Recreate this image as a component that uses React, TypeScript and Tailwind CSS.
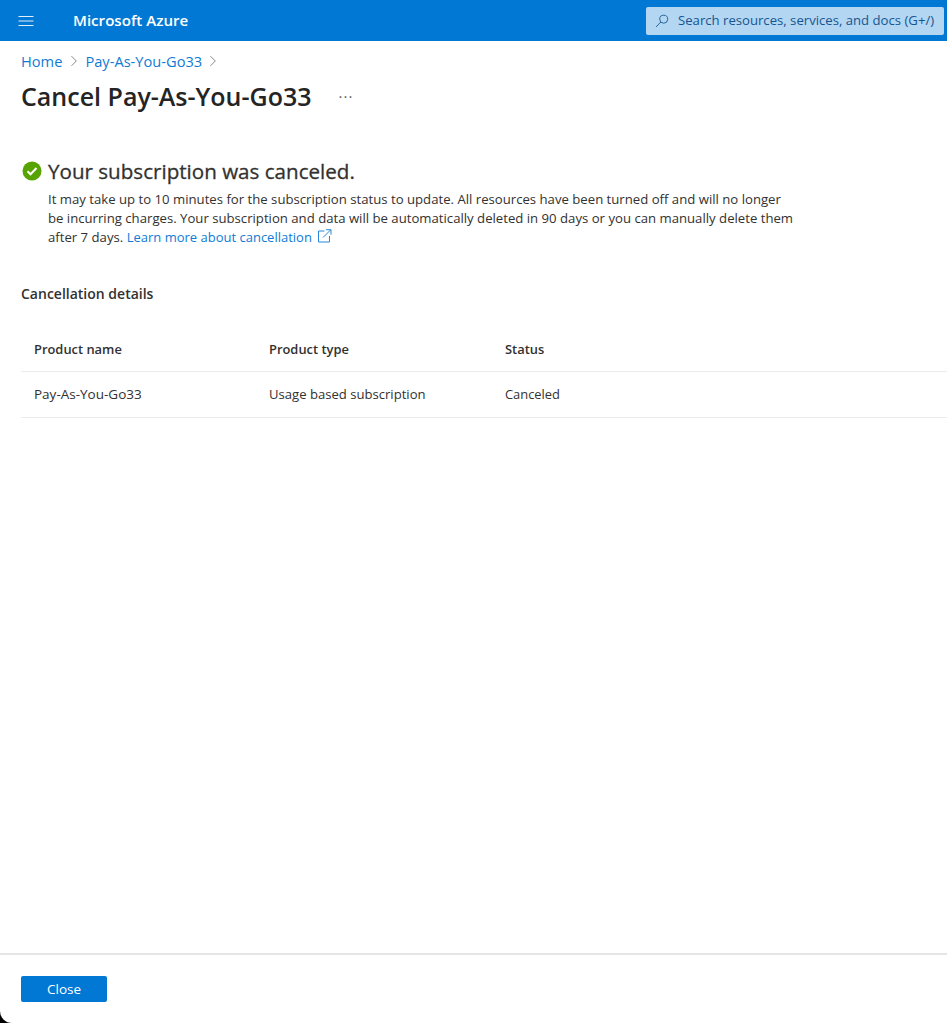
import React from "react";

function Chevron() {
  return (
    <svg width="8" height="12" viewBox="0 0 8 12" fill="none" className="shrink-0">
      <path d="M1.5 1.2 6.3 6l-4.8 4.8" stroke="#8a8886" strokeWidth="1" />
    </svg>
  );
}

export default function App() {
  return (
    <div className="h-[1023px] w-[947px] overflow-hidden bg-black">
      <div className="flex h-full flex-col rounded-bl-[12px] bg-white font-['Open_Sans','Noto_Sans',sans-serif] text-[#323130]">
        <header className="flex h-[41px] shrink-0 items-center bg-[#0078d4] pl-[18px] pr-[3px]">
          <svg width="16" height="12" viewBox="0 0 16 12" fill="none">
            <path d="M0.5 1.5h15M0.5 6h15M0.5 10.500h15" stroke="#e3effa" strokeWidth="1" />
          </svg>
          <span className="ml-[39px] text-[15.100px] font-semibold leading-none text-white">Microsoft Azure</span>
          <div className="ml-auto flex h-[28px] w-[298px] items-center rounded-[2px] bg-[#b3d6f2] pl-[9px]">
            <svg width="14" height="14" viewBox="0 0 14 14" fill="none">
              <circle cx="8.700" cy="5.200" r="4" stroke="#1b5a8f" strokeWidth="0.900" />
              <path d="M5.800 8 1 13" stroke="#1b5a8f" strokeWidth="0.900" />
            </svg>
            <span className="ml-[9px] whitespace-nowrap text-[13.150px] leading-none text-[#15558f]">
              Search resources, services, and docs (G+/)
            </span>
          </div>
        </header>

        <main className="min-h-0 flex-1 pl-[21px]">
          <nav className="mt-[11px] flex h-[18px] items-center text-[14.650px] leading-none text-[#0f7bd4]">
            <span>Home</span>
            <span className="ml-[8px] mr-[7px]"><Chevron /></span>
            <span>Pay-As-You-Go33</span>
            <span className="ml-[7px]"><Chevron /></span>
          </nav>
          <div className="mt-[9px] flex h-[34px] items-center">
            <h1 className="text-[25px] font-semibold leading-none text-[#242424]">Cancel Pay-As-You-Go33</h1>
            <span className="ml-[27px] text-[15px] leading-none tracking-[1px] text-[#605e5c]">···</span>
          </div>

          <section className="mt-[43px]">
            <div className="flex h-[30px] items-center">
              <svg width="20" height="20" viewBox="0 0 20 20" className="ml-[1px] shrink-0">
                <circle cx="10" cy="10" r="9.500" fill="#57a300" />
                <path d="M5.500 10.300 8.500 13.300 14.500 7" fill="none" stroke="#fff" strokeWidth="2" />
              </svg>
              <h2 className="ml-[6px] text-[20.600px] leading-none text-[#323130] [-webkit-text-stroke:0.3px_#323130]">Your subscription was canceled.</h2>
            </div>
            <p className="ml-[27px] mt-[4px] w-[750px] text-[13.160px] leading-[19px] text-[#323130]">
              It may take up to 10 minutes for the subscription status to update. All resources have been turned off and will no longer
              be incurring charges. Your subscription and data will be automatically deleted in 90 days or you can manually delete them
              after 7 days.{" "}
              <span className="text-[13px] text-[#0f7bd4]">Learn more about cancellation</span>
              <svg width="15" height="14" viewBox="0 0 15 14" fill="none" className="-mt-[4px] ml-[5px] inline-block">
                <path d="M7.500 2H1.500v11h11V7" stroke="#0f7bd4" strokeWidth="0.900" />
                <path d="M6 8.500 13.500 1M9 0.700h5v5" stroke="#0f7bd4" strokeWidth="0.900" />
              </svg>
            </p>
          </section>

          <h3 className="mt-[38px] text-[14px] font-semibold leading-[18px] text-[#323130]">Cancellation details</h3>

          <div className="mt-[22px] text-[13.500px] text-[#323130]">
            <div className="grid h-[47px] grid-cols-[235px_236px_1fr] items-center border-b border-[#edebe9] pl-[13px] pt-[3px] text-[12.900px] font-semibold">
              <span>Product name</span>
              <span>Product type</span>
              <span>Status</span>
            </div>
            <div className="grid h-[46px] grid-cols-[235px_236px_1fr] items-center border-b border-[#edebe9] pl-[13px]">
              <span>Pay-As-You-Go33</span>
              <span className="text-[13.100px]">Usage based subscription</span>
              <span className="text-[12.900px]">Canceled</span>
            </div>
          </div>
        </main>

        <footer className="flex h-[70px] shrink-0 items-start border-t-2 border-[#e5e5e5] pl-[21px] pt-[21px]">
          <button className="flex h-[26px] w-[86px] items-center justify-center rounded-[2px] bg-[#0078d4] text-[13.500px] font-medium text-white">
            Close
          </button>
        </footer>
      </div>
    </div>
  );
}
